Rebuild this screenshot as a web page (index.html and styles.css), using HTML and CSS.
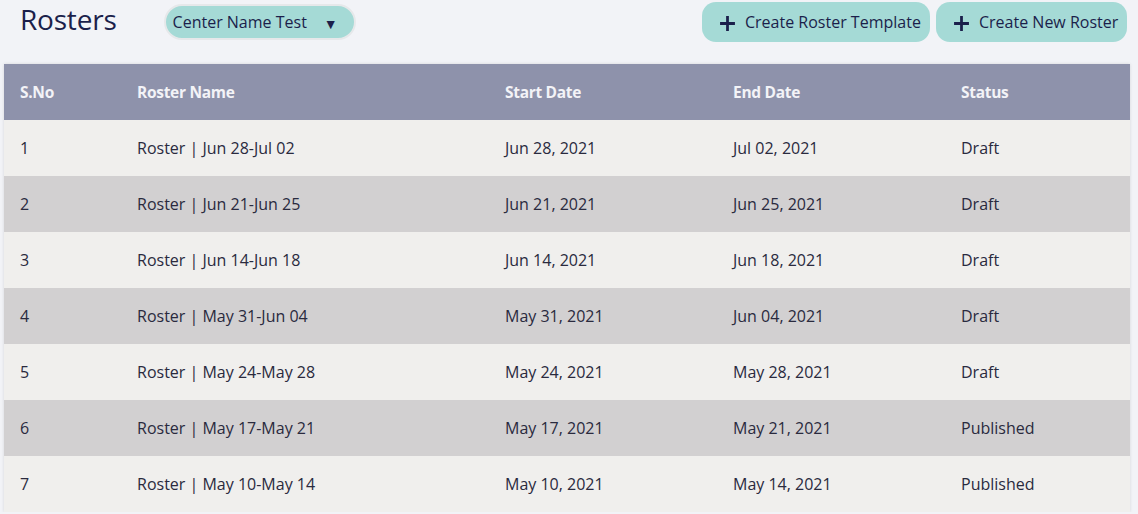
FILE: index.html
```html
<!DOCTYPE html>
<html>
<head>
<meta charset="utf-8">
<link rel="stylesheet" href="styles.css">
</head>
<body>
<div class="page">
  <header class="topbar">
    <div class="left">
      <h1 class="title">Rosters</h1>
      <div class="select">
        <span>Center Name Test</span>
        <span class="caret">▼</span>
      </div>
    </div>
    <div class="actions">
      <button class="btn btn-template"><svg class="plus" viewBox="0 0 16 16"><path d="M8 1v14M1 8h14" stroke="#1b1f4b" stroke-width="2.6" fill="none"/></svg><span>Create Roster Template</span></button>
      <button class="btn btn-new"><svg class="plus" viewBox="0 0 16 16"><path d="M8 1v14M1 8h14" stroke="#1b1f4b" stroke-width="2.6" fill="none"/></svg><span>Create New Roster</span></button>
    </div>
  </header>
  <table class="grid">
    <thead>
      <tr><th class="c1">S.No</th><th class="c2">Roster Name</th><th class="c3">Start Date</th><th class="c4">End Date</th><th class="c5">Status</th></tr>
    </thead>
    <tbody>
      <tr><td>1</td><td>Roster | Jun 28-Jul 02</td><td>Jun 28, 2021</td><td>Jul 02, 2021</td><td>Draft</td></tr>
      <tr><td>2</td><td>Roster | Jun 21-Jun 25</td><td>Jun 21, 2021</td><td>Jun 25, 2021</td><td>Draft</td></tr>
      <tr><td>3</td><td>Roster | Jun 14-Jun 18</td><td>Jun 14, 2021</td><td>Jun 18, 2021</td><td>Draft</td></tr>
      <tr><td>4</td><td>Roster | May 31-Jun 04</td><td>May 31, 2021</td><td>Jun 04, 2021</td><td>Draft</td></tr>
      <tr><td>5</td><td>Roster | May 24-May 28</td><td>May 24, 2021</td><td>May 28, 2021</td><td>Draft</td></tr>
      <tr><td>6</td><td>Roster | May 17-May 21</td><td>May 17, 2021</td><td>May 21, 2021</td><td>Published</td></tr>
      <tr><td>7</td><td>Roster | May 10-May 14</td><td>May 10, 2021</td><td>May 14, 2021</td><td>Published</td></tr>
    </tbody>
  </table>
</div>
</body>
</html>
```
FILE: styles.css
```css
* { box-sizing: border-box; }
html, body { margin: 0; padding: 0; }
body {
  background: #f2f3f7;
  font-family: "Open Sans", "Noto Sans", sans-serif;
  color: #1c1f4a;
  overflow: hidden;
}
.page { padding: 2px 8px 0 4px; }
.topbar {
  display: flex;
  justify-content: space-between;
  align-items: flex-start;
  height: 62px;
}
.left { display: flex; align-items: flex-start; padding-left: 16px; }
.title {
  margin: 0;
  font-size: 28px;
  font-weight: 400;
  line-height: 34px;
  color: #1b1f4b;
  letter-spacing: -0.2px;
}
.select {
  margin-left: 47px;
  margin-top: 2px;
  width: 192px;
  height: 36px;
  border-radius: 18px;
  background: #a5dad6;
  border: 2px solid #e6e8ea;
  display: flex;
  align-items: center;
  padding-left: 7px;
  font-size: 16px;
  color: #1b1f4b;
}
.caret { margin-left: 17px; font-size: 14px; margin-top: 3px; }
.actions { display: flex; gap: 6px; margin-right: 3px; }
.btn {
  height: 40px;
  border: none;
  border-radius: 14px;
  background: #a5dad6;
  font-family: "Open Sans", sans-serif;
  font-size: 16px;
  color: #1b1f4b;
  display: flex;
  align-items: center;
  padding: 0 8px 0 17px;
  margin: 0;
  white-space: nowrap;
}
.btn-template { width: 228px; }
.btn-new { width: 191px; }
.plus { width: 17px; height: 17px; margin-right: 9px; margin-top: 3px; }
.grid {
  width: 1126px;
  border-collapse: collapse;
  table-layout: fixed;
  box-shadow: 0 0 3px rgba(0,0,0,0.12);
}
.grid th, .grid td { box-sizing: content-box; }
.grid th {
  background: #8e92ab;
  color: #f3f3f7;
  font-weight: 700;
  font-size: 15.5px;
  text-align: left;
  height: 56px;
  padding: 0 0 0 16px;
  letter-spacing: -0.3px;
}
.c1 { width: 101px; }
.c2 { width: 352px; }
.c3 { width: 212px; }
.c4 { width: 212px; }
.c5 { width: 169px; }
.grid td {
  height: 56px;
  padding: 0 0 0 16px;
  font-size: 16px;
  color: #2a2a3e;
}
.grid tbody tr:nth-child(odd) td { background: #f0efed; }
.grid tbody tr:nth-child(even) td { background: #d2d0d1; }
```
